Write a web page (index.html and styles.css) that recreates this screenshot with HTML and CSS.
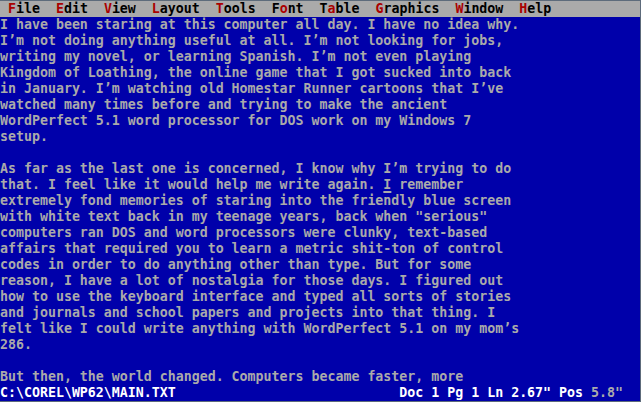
FILE: index.html
```html
<!DOCTYPE html>
<html>
<head>
<meta charset="utf-8">
<link rel="stylesheet" href="styles.css">
</head>
<body>
<div class="screen">
<div class="menubar"> <span class="hk">F</span>ile  <span class="hk">E</span>dit  <span class="hk">V</span>iew  <span class="hk">L</span>ayout  <span class="hk">T</span>ools  F<span class="hk">o</span>nt  T<span class="hk">a</span>ble  <span class="hk">G</span>raphics  <span class="hk">W</span>indow  <span class="hk">H</span>elp</div>
<div class="doc">I have been staring at this computer all day. I have no idea why.
I’m not doing anything useful at all. I’m not looking for jobs,
writing my novel, or learning Spanish. I’m not even playing
Kingdom of Loathing, the online game that I got sucked into back
in January. I’m watching old Homestar Runner cartoons that I’ve
watched many times before and trying to make the ancient
WordPerfect 5.1 word processor for DOS work on my Windows 7
setup.

As far as the last one is concerned, I know why I’m trying to do
that. I feel like it would help me write again. <span class="cursor">I</span> remember
extremely fond memories of staring into the friendly blue screen
with white text back in my teenage years, back when "serious"
computers ran DOS and word processors were clunky, text-based
affairs that required you to learn a metric shit-ton of control
codes in order to do anything other than type. But for some
reason, I have a lot of nostalgia for those days. I figured out
how to use the keyboard interface and typed all sorts of stories
and journals and school papers and projects into that thing. I
felt like I could write anything with WordPerfect 5.1 on my mom’s
286.

But then, the world changed. Computers became faster, more</div>
<div class="status"><span class="bright">C:\COREL\WP62\MAIN.TXT                            Doc 1 Pg 1 Ln 2.67" Pos </span>5.8"</div>
</div>
</body>
</html>
```
FILE: styles.css
```css
html, body {
  margin: 0;
  padding: 0;
  background: #5d6b7b;
}
body {
  width: 641px;
  height: 402px;
  overflow: hidden;
}
.screen {
  margin-top: 1px;
  width: 640px;
  height: 400px;
  background: #0000aa;
  color: #aaaaaa;
  font-family: "DejaVu Sans Mono", "Liberation Mono", monospace;
  font-size: 13.28px;
  font-weight: bold;
  line-height: 16px;
  overflow: hidden;
}
.menubar,
.doc,
.status {
  white-space: pre;
}
.menubar {
  height: 16px;
  background: #aaaaaa;
  color: #000000;
}
.hk {
  color: #aa0000;
}
.doc {
  height: 368px;
}
.cursor {
  text-decoration: underline;
  text-decoration-thickness: 2px;
  text-underline-offset: 2px;
}
.status {
  height: 16px;
}
.bright {
  color: #ffffff;
}
```
